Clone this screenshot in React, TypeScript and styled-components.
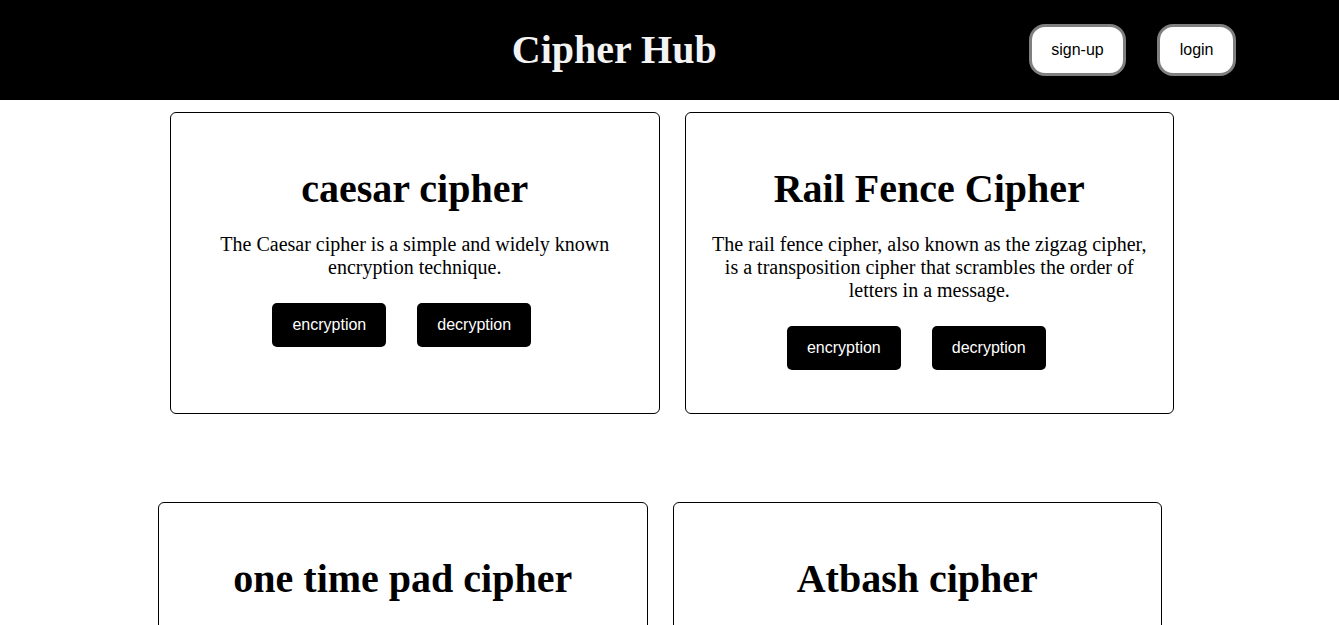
import React from "react";
import styled, { createGlobalStyle } from "styled-components";

const Global = createGlobalStyle`
  html, body { margin: 0; padding: 0; background: #fff; }
  body { font-family: "Liberation Serif", "Times New Roman", serif; color: #000; }
  * { box-sizing: border-box; }
`;

const Header = styled.header`
  height: 100px;
  background: #000;
  display: flex;
  align-items: center;
  justify-content: flex-end;
  padding-right: 103px;
`;

const Brand = styled.h1`
  margin: 0 312px 0 0;
  font-family: "Liberation Serif", "Times New Roman", serif;
  font-size: 40px;
  font-weight: bold;
  color: #f3f3f3;
  line-height: 46px;
`;

const NavButtons = styled.div`
  display: flex;
  gap: 31px;
  align-items: center;
`;

const NavButton = styled.button`
  font-family: "Liberation Sans", Arial, sans-serif;
  font-size: 16px;
  line-height: 18px;
  background: #fff;
  color: #000;
  border: 3px solid #7f7f7f;
  border-radius: 16px;
  padding: 14px 19.5px;
  cursor: pointer;
`;

const Main = styled.main`
  display: flex;
  flex-direction: column;
  padding-top: 12px;
  gap: 88px;
`;

const Row = styled.section<{ $indent: number }>`
  display: flex;
  gap: 25px;
  padding-left: ${(p) => p.$indent}px;
`;

const Card = styled.article`
  width: 489.5px;
  height: 302px;
  flex-shrink: 0;
  border: 1px solid #000;
  border-radius: 6px;
  padding: 20px;
  display: flex;
  flex-direction: column;
  align-items: center;
  text-align: center;
`;

const CardTitle = styled.h2`
  margin: 33px 0 0;
  font-size: 40px;
  line-height: 46px;
  font-weight: bold;
`;

const CardText = styled.p`
  margin: 21px 0 0;
  font-size: 20px;
  line-height: 23px;
`;

const Actions = styled.div`
  display: flex;
  justify-content: center;
  gap: 5px;
  margin-top: 24px;
`;

const ActionButton = styled.button`
  font-family: "Liberation Sans", Arial, sans-serif;
  font-size: 16px;
  line-height: 18px;
  background: #000;
  color: #fff;
  border: none;
  border-radius: 5px;
  padding: 13px 20px;
  margin-right: 26px;
  cursor: pointer;
`;

type Cipher = { title: string; text?: string };

const rows: { indent: number; items: Cipher[] }[] = [
  {
    indent: 170,
    items: [
      {
        title: "caesar cipher",
        text: "The Caesar cipher is a simple and widely known encryption technique.",
      },
      {
        title: "Rail Fence Cipher",
        text: "The rail fence cipher, also known as the zigzag cipher, is a transposition cipher that scrambles the order of letters in a message.",
      },
    ],
  },
  {
    indent: 158,
    items: [
      { title: "one time pad cipher", text: "The one-time pad is an encryption technique that cannot be cracked." },
      { title: "Atbash cipher", text: "The Atbash cipher is a substitution cipher that reverses the alphabet." },
    ],
  },
];

export default function App() {
  return (
    <>
      <Global />
      <Header>
        <Brand>Cipher Hub</Brand>
        <NavButtons>
          <NavButton>sign-up</NavButton>
          <NavButton>login</NavButton>
        </NavButtons>
      </Header>
      <Main>
        {rows.map((row, i) => (
          <Row key={i} $indent={row.indent}>
            {row.items.map((c) => (
              <Card key={c.title}>
                <CardTitle>{c.title}</CardTitle>
                {c.text && <CardText>{c.text}</CardText>}
                <Actions>
                  <ActionButton>encryption</ActionButton>
                  <ActionButton>decryption</ActionButton>
                </Actions>
              </Card>
            ))}
          </Row>
        ))}
      </Main>
    </>
  );
}
